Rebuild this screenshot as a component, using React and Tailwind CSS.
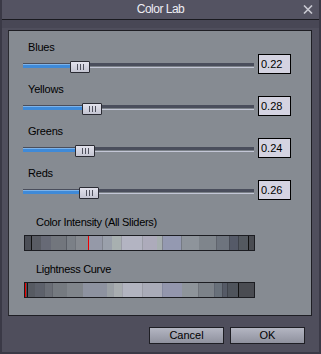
import React from "react";

const F = { fontFamily: '"Liberation Sans", Arial, sans-serif' };

const intensity = [
  [6, "#4c4f57", null],
  [10, "#595c64", "#111"],
  [10, "#676a76", null],
  [15, "#72767d", null],
  [9, "#7b8087", "#5a5e66"],
  [13, "#868a90", "#70747b"],
  [14, "#9599a8", "#e00"],
  [10, "#9aa0ab", "#80848e"],
  [9, "#a8b0b0", null],
  [21, "#b3b4c2", "#9a9ca6"],
  [15, "#adabbb", "#9a9ca6"],
  [5, "#a7afb0", null],
  [19, "#9499b1", "#80848e"],
  [18, "#8e949b", "#757a84"],
  [17, "#7f858c", null],
  [13, "#6e747e", "#60646d"],
  [9, "#555a68", "#4a4e58"],
  [10, "#545960", "#3e424a"],
  [0, "#4a4c52", "#111"],
];

const lightness = [
  [2, "#4a4d55", "#e00"],
  [8, "#565a62", "#111"],
  [9, "#5d616b", null],
  [8, "#6a6e76", "#5a5e66"],
  [15, "#757a80", "#60646c"],
  [16, "#80858b", null],
  [24, "#8d92a0", null],
  [6, "#9aa0a5", null],
  [9, "#a8adb0", "#9a9ea6"],
  [20, "#b2b4c0", "#a0a2ac"],
  [20, "#a9abb8", "#9a9ca6"],
  [20, "#9396ad", "#858aa0"],
  [16, "#8e949a", null],
  [16, "#7c8289", "#70747b"],
  [8, "#68707a", "#5e6470"],
  [5, "#555a66", "#4a4e58"],
  [11, "#4f545c", "#3e424a"],
  [0, "#4a4c52", "#111"],
];

function Bar({ segs }) {
  return (
    <div className="ml-[15px] flex h-[16px] w-[231px] border border-[#1c1d22] bg-[#4a4c52] overflow-hidden">
      {segs.map(([w, c, tick], i) => (
        <div
          key={i}
          className={w === 0 ? "h-full flex-1" : "h-full shrink-0"}
          style={{
            width: w === 0 ? undefined : w,
            background: c,
            borderLeft: tick ? `1px solid ${tick}` : undefined,
          }}
        />
      ))}
    </div>
  );
}

function SliderRow({ label, value, pos }) {
  return (
    <div className="mb-[8px] flex flex-col">
      <div className="h-[14px] pl-[19px] text-[11px] leading-[14px] tracking-[-0.2px] text-black">
        {label}
      </div>
      <div className="flex h-[20px] items-start pl-[14px]">
        <div className="relative h-[20px] w-[231px]">
          <div className="mt-[9px] flex flex-col">
            <div className="h-[3px] bg-[#4a4e5c]" />
            <div className="h-[1px] bg-[#7c8289]" />
            <div className="h-[1px] bg-[#c3c6d6]" />
          </div>
          <div
            className="absolute left-0 top-[10px] flex h-[4px] flex-col"
            style={{ width: pos + 2 }}
          >
            <div className="h-[1px] bg-[#7db3ea]" />
            <div className="h-[3px] bg-[#3f8ad8]" />
          </div>
          <div
            className="absolute top-[7px] flex h-[12px] w-[20px] items-center justify-center gap-[2px] rounded-[1px] border border-[#2a2b33] bg-gradient-to-b from-[#e2e2ec] to-[#c4c5d2]"
            style={{ left: pos }}
          >
            <div className="h-[6px] w-[1px] bg-[#50525e]" />
            <div className="h-[6px] w-[1px] bg-[#50525e]" />
            <div className="h-[6px] w-[1px] bg-[#50525e]" />
          </div>
        </div>
        <div className="ml-[4px] h-[20px] w-[33px] border border-black bg-[#d4d3e1] pl-[2px] text-[11px] leading-[18px] text-black">
          {value}
        </div>
      </div>
    </div>
  );
}

export default function App() {
  return (
    <div
      style={F}
      className="flex h-[354px] w-[321px] flex-col border-x-2 border-b-2 border-[#3a3946] bg-[#4f4e5c]"
    >
      <div className="relative flex h-[20px] shrink-0 items-center justify-center border-b border-[#1a1a20] bg-[#545362]">
        <span className="text-[12px] leading-[19px] tracking-[-0.5px] text-[#eeeef4]">
          Color Lab
        </span>
        <svg
          className="absolute right-[6px] top-[5px]"
          width="10"
          height="9"
          viewBox="0 0 10 9"
        >
          <path d="M1 0.5 L9 8.5 M9 0.5 L1 8.5" stroke="#c9c9d2" strokeWidth="1.6" />
        </svg>
      </div>
      <div className="h-[8px] shrink-0 bg-[#484755]" />
      <div className="ml-[6px] mt-[2px] flex h-[286px] w-[304px] flex-col border border-[#1e1e24] border-l-[#2a2a30] bg-[#868b92] pt-[9px]">
        <SliderRow label="Blues" value="0.22" pos={47} />
        <SliderRow label="Yellows" value="0.28" pos={59} />
        <SliderRow label="Greens" value="0.24" pos={52} />
        <SliderRow label="Reds" value="0.26" pos={56} />
        <div className="mt-[7px] h-[14px] pl-[27px] text-[11px] leading-[14px] tracking-[-0.3px] text-black">
          Color Intensity (All Sliders)
        </div>
        <div className="mt-[6px]">
          <Bar segs={intensity} />
        </div>
        <div className="mt-[11px] h-[14px] pl-[27px] text-[11px] leading-[14px] tracking-[-0.3px] text-black">
          Lightness Curve
        </div>
        <div className="mt-[6px]">
          <Bar segs={lightness} />
        </div>
      </div>
      <div className="mt-[11px] flex justify-end gap-[6px] pr-[14px]">
        <button className="flex h-[17px] w-[75px] items-center justify-center border border-[#1e1e24] bg-gradient-to-b from-[#b4b6c2] to-[#8f919e] text-[11px] leading-none text-black">
          Cancel
        </button>
        <button className="flex h-[17px] w-[75px] items-center justify-center border border-[#1e1e24] bg-gradient-to-b from-[#b4b6c2] to-[#8f919e] text-[11px] leading-none text-black">
          OK
        </button>
      </div>
    </div>
  );
}
